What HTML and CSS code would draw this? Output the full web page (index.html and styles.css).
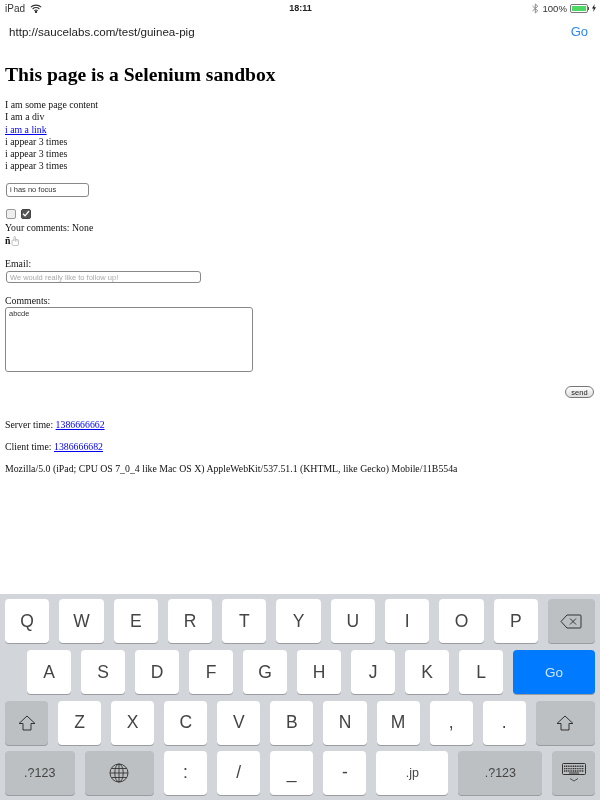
FILE: index.html
```html
<!DOCTYPE html>
<html lang="en">
<head>
    <meta charset="UTF-8">
    <title>I am a page title - Sauce Labs</title>
    <link rel="stylesheet" href="styles.css">
</head>
<body>
    <div class="screen">
        <div class="status-bar">
            <div class="status-left">
                <span>iPad</span>
                <svg class="wifi" width="12" height="9" viewBox="0 0 12 9" fill="none" stroke="#333" stroke-width="1.1"><path d="M0.8 3.2 A7.5 7.5 0 0 1 11.2 3.2"/><path d="M2.6 5 A5 5 0 0 1 9.4 5"/><path d="M4.3 6.8 A2.5 2.5 0 0 1 7.7 6.8"/><circle cx="6" cy="8" r="0.6" fill="#333"/></svg>
            </div>
            <div class="status-time">18:11</div>
            <div class="status-right">
                <svg width="7" height="11" viewBox="0 0 7 11"><path d="M0.5 3 L5.8 7.8 L3.3 10 V1 L5.8 3.2 L0.5 8" fill="none" stroke="#8a8a8a" stroke-width="1"/></svg>
                <span class="battery-pct">100%</span>
                <div class="battery"><div class="battery-fill"></div></div>
                <div class="battery-tip"></div>
                <svg width="4" height="8" viewBox="0 0 4 8"><path d="M2.6 0 L0 4.6 H1.7 L1.2 8 L4 3.2 H2.2 Z" fill="#222"/></svg>
            </div>
        </div>
        <div class="address-bar">
            <span class="address-url">http://saucelabs.com/test/guinea-pig</span>
            <span class="address-go">Go</span>
        </div>

        <div class="page">
            <h1>This page is a Selenium sandbox</h1>
            <div class="lines">
                <div>I am some page content</div>
                <div>I am a div</div>
                <div><a href="#">i am a link</a></div>
                <div>i appear 3 times</div>
                <div>i appear 3 times</div>
                <div>i appear 3 times</div>
            </div>
            <input class="field focus-field" type="text" value="i has no focus">
            <div class="checks">
                <span class="check"></span>
                <span class="check checked">
                    <svg width="8" height="7" viewBox="0 0 8 7"><path d="M1 3.8 L3 5.8 L7 1" fill="none" stroke="#fff" stroke-width="1.3"/></svg>
                </span>
            </div>
            <div class="line">Your comments: None</div>
            <div class="special">
                <b>ñ</b>
                <svg width="8" height="10" viewBox="0 0 8 10"><path d="M1 5 V8 Q1 9.5 2.5 9.5 H6 Q7.5 9.5 7.5 8 V4.5 Q7.5 3.5 6.5 3.5 H4.5 V1.2 Q4.5 0.5 3.7 0.5 Q3 0.5 3 1.2 V5 M1 5 Q1 4 2 4 H3 M4.5 3.5 V5.5 M6 3.5 V5.5" fill="none" stroke="#aaa" stroke-width="0.7"/></svg>
            </div>
            <label class="form-label email-label">Email:</label>
            <input class="field email-field" type="text" placeholder="We would really like to follow up!">
            <label class="form-label comments-label">Comments:</label>
            <textarea class="comments">abcde</textarea>
            <div class="send-row"><button class="send-btn">send</button></div>
            <p class="time server-time">Server time: <a href="#">1386666662</a></p>
            <p class="time">Client time: <a href="#">1386666682</a></p>
            <p class="time">Mozilla/5.0 (iPad; CPU OS 7_0_4 like Mac OS X) AppleWebKit/537.51.1 (KHTML, like Gecko) Mobile/11B554a</p>
        </div>

        <div class="keyboard">
            <div class="key-row row-1">
                <div class="key">Q</div>
                <div class="key">W</div>
                <div class="key">E</div>
                <div class="key">R</div>
                <div class="key">T</div>
                <div class="key">Y</div>
                <div class="key">U</div>
                <div class="key">I</div>
                <div class="key">O</div>
                <div class="key">P</div>
                <div class="key dark">
                    <svg width="22" height="15" viewBox="0 0 22 15"><path d="M7 1 H20 Q21 1 21 2 V13 Q21 14 20 14 H7 L1 7.5 Z" fill="none" stroke="#333" stroke-width="1"/><path d="M10 4.5 L16 10.5 M16 4.5 L10 10.5" stroke="#333" stroke-width="1"/></svg>
                </div>
            </div>
            <div class="key-row row-2">
                <div class="key">A</div>
                <div class="key">S</div>
                <div class="key">D</div>
                <div class="key">F</div>
                <div class="key">G</div>
                <div class="key">H</div>
                <div class="key">J</div>
                <div class="key">K</div>
                <div class="key">L</div>
                <div class="key go">Go</div>
            </div>
            <div class="key-row row-3">
                <div class="key dark shift-left">
                    <svg width="18" height="16" viewBox="0 0 18 16"><path d="M9 1 L17 8.5 H13 V15 H5 V8.5 H1 Z" fill="none" stroke="#333" stroke-width="1"/></svg>
                </div>
                <div class="key">Z</div>
                <div class="key">X</div>
                <div class="key">C</div>
                <div class="key">V</div>
                <div class="key">B</div>
                <div class="key">N</div>
                <div class="key">M</div>
                <div class="key">,</div>
                <div class="key">.</div>
                <div class="key dark shift-right">
                    <svg width="18" height="16" viewBox="0 0 18 16"><path d="M9 1 L17 8.5 H13 V15 H5 V8.5 H1 Z" fill="none" stroke="#333" stroke-width="1"/></svg>
                </div>
            </div>
            <div class="key-row row-4">
                <div class="key dark small wide-left">.?123</div>
                <div class="key dark wide-left">
                    <svg width="20" height="20" viewBox="0 0 20 20" fill="none" stroke="#333" stroke-width="0.9"><circle cx="10" cy="10" r="9"/><ellipse cx="10" cy="10" rx="4.2" ry="9"/><path d="M10 1 V19 M1 10 H19 M2.4 5.5 H17.6 M2.4 14.5 H17.6"/></svg>
                </div>
                <div class="key">:</div>
                <div class="key">/</div>
                <div class="key">_</div>
                <div class="key">-</div>
                <div class="key small jp">.jp</div>
                <div class="key dark small num-right">.?123</div>
                <div class="key dark hide-key">
                    <svg width="24" height="20" viewBox="0 0 24 20" fill="none" stroke="#333"><rect x="0.5" y="0.5" width="23" height="11" rx="1"/><path d="M2 3.2 H22 M2 5.6 H22 M2 8 H22" stroke-width="1.4" stroke-dasharray="1.2 0.6"/><path d="M7 10 H17" stroke-width="1"/><path d="M8 15.5 L12 18 L16 15.5" stroke-width="0.8"/></svg>
                </div>
            </div>
        </div>
    </div>
</body>
</html>
```

FILE: styles.css
```css
* {
    box-sizing: border-box;
}

body {
    margin: 0;
    background: #fff;
}

/* the reference is a scaled down capture, so everything is a little soft */
.screen {
    width: 600px;
    height: 800px;
    display: flex;
    flex-direction: column;
    overflow: hidden;
    filter: blur(0.35px);
}

.status-bar {
    height: 16px;
    padding: 0 4px 0 5px;
    display: grid;
    grid-template-columns: 1fr auto 1fr;
    align-items: center;
    font-family: "Liberation Sans", sans-serif;
    font-size: 10px;
    color: #333;
}

.status-left {
    display: flex;
    align-items: center;
    gap: 5px;
}

.status-time {
    font-size: 9px;
    font-weight: bold;
    color: #222;
}

.status-right {
    display: flex;
    justify-content: flex-end;
    align-items: center;
    gap: 3px;
}

.battery-pct {
    font-size: 9.6px;
}

.battery {
    width: 18px;
    height: 9px;
    border: 1px solid #777;
    border-radius: 2px;
    padding: 1px;
}

.battery-fill {
    height: 100%;
    background: #4cd964;
}

.battery-tip {
    width: 1px;
    height: 3px;
    margin-left: -3px;
    background: #555;
}

.address-bar {
    height: 30px;
    padding: 0 12px 0 9px;
    display: flex;
    justify-content: space-between;
    align-items: center;
    font-family: "Liberation Sans", sans-serif;
}

.address-url {
    font-size: 11.6px;
    color: #222;
}

.address-go {
    font-size: 13px;
    color: #2a86f5;
}

.page {
    flex: 1;
    min-height: 0;
    padding: 0 5px;
    font-family: "Liberation Serif", serif;
    font-size: 9.8px;
    line-height: 12.3px;
    color: #111;
}

.page a {
    color: #00e;
}

.page h1 {
    margin: 17px 0 12px;
    font-size: 19.6px;
    line-height: 24px;
    color: #000;
}

.field {
    display: block;
    border: 1px solid #888;
    border-radius: 3px;
    padding: 0 3px;
    font-family: "Liberation Sans", sans-serif;
    font-size: 7.5px;
    background: #fff;
    outline: none;
}

.focus-field {
    width: 83px;
    height: 14px;
    margin: 10px 0 0 1px;
    color: #333;
}

.email-field {
    width: 195px;
    height: 12px;
    margin-left: 1px;
}

.email-field::placeholder {
    color: #aaa;
}

.checks {
    display: flex;
    gap: 5px;
    margin: 12px 0 3px 1px;
}

.check {
    width: 10px;
    height: 10px;
    border: 1px solid #999;
    border-radius: 2px;
    background: #eee;
    display: flex;
    align-items: center;
    justify-content: center;
}

.checked {
    background: #555;
    border-color: #444;
}

.special {
    display: flex;
    align-items: center;
    gap: 1px;
    margin-top: 1px;
    height: 12px;
}

.form-label {
    display: block;
}

.email-label {
    margin-top: 11px;
    height: 13px;
}

.comments-label {
    margin-top: 12px;
    height: 12px;
}

.comments {
    display: block;
    width: 248px;
    height: 65px;
    padding: 1px 3px;
    border: 1px solid #888;
    border-radius: 3px;
    font-family: "Liberation Sans", sans-serif;
    font-size: 7.5px;
    color: #333;
    resize: none;
    outline: none;
}

.send-row {
    display: flex;
    justify-content: flex-end;
    margin-top: 14px;
    padding-right: 1px;
}

.send-btn {
    width: 29px;
    height: 12px;
    padding: 0;
    border: 1px solid #777;
    border-radius: 6px;
    background: linear-gradient(#fff, #ddd);
    font-family: "Liberation Sans", sans-serif;
    font-size: 7.5px;
    color: #222;
}

.time {
    margin: 0 0 9.5px;
}

.server-time {
    margin-top: 21px;
}

.keyboard {
    height: 206px;
    flex-shrink: 0;
    padding: 5px 5px 0;
    display: flex;
    flex-direction: column;
    gap: 6.3px;
    background: #d2d5d9;
    font-family: "Liberation Sans", sans-serif;
    font-size: 17.5px;
    color: #444;
}

.key-row {
    height: 44px;
    display: flex;
    gap: 10px;
}

.key {
    flex: 0 0 44.3px;
    display: flex;
    align-items: center;
    justify-content: center;
    background: #fff;
    border-radius: 4px;
    box-shadow: 0 1px 0 #9a9c9f;
}

.key.dark {
    background: #bcc0c3;
}

.row-1 .dark {
    flex: 0 0 47px;
}

.row-2 {
    padding-left: 22px;
    margin-top: 1px;
}

.row-2 .key {
    flex-basis: 44px;
}

.row-2 .key.go {
    flex-basis: 82px;
    background: #007aff;
    color: #cfe4ff;
    font-size: 13.5px;
}

.row-3 .key {
    flex-basis: 43.1px;
}

.row-3 .key.shift-left {
    flex-basis: 43px;
}

.row-3 .key.shift-right {
    flex-basis: 59px;
}

.row-4 .key {
    flex-basis: 43.1px;
}

.row-4 .key.wide-left {
    flex-basis: 69.5px;
}

.row-4 .key.jp {
    flex-basis: 72px;
}

.row-4 .key.num-right {
    flex-basis: 84px;
}

.key.small {
    font-size: 12.5px;
}
```
